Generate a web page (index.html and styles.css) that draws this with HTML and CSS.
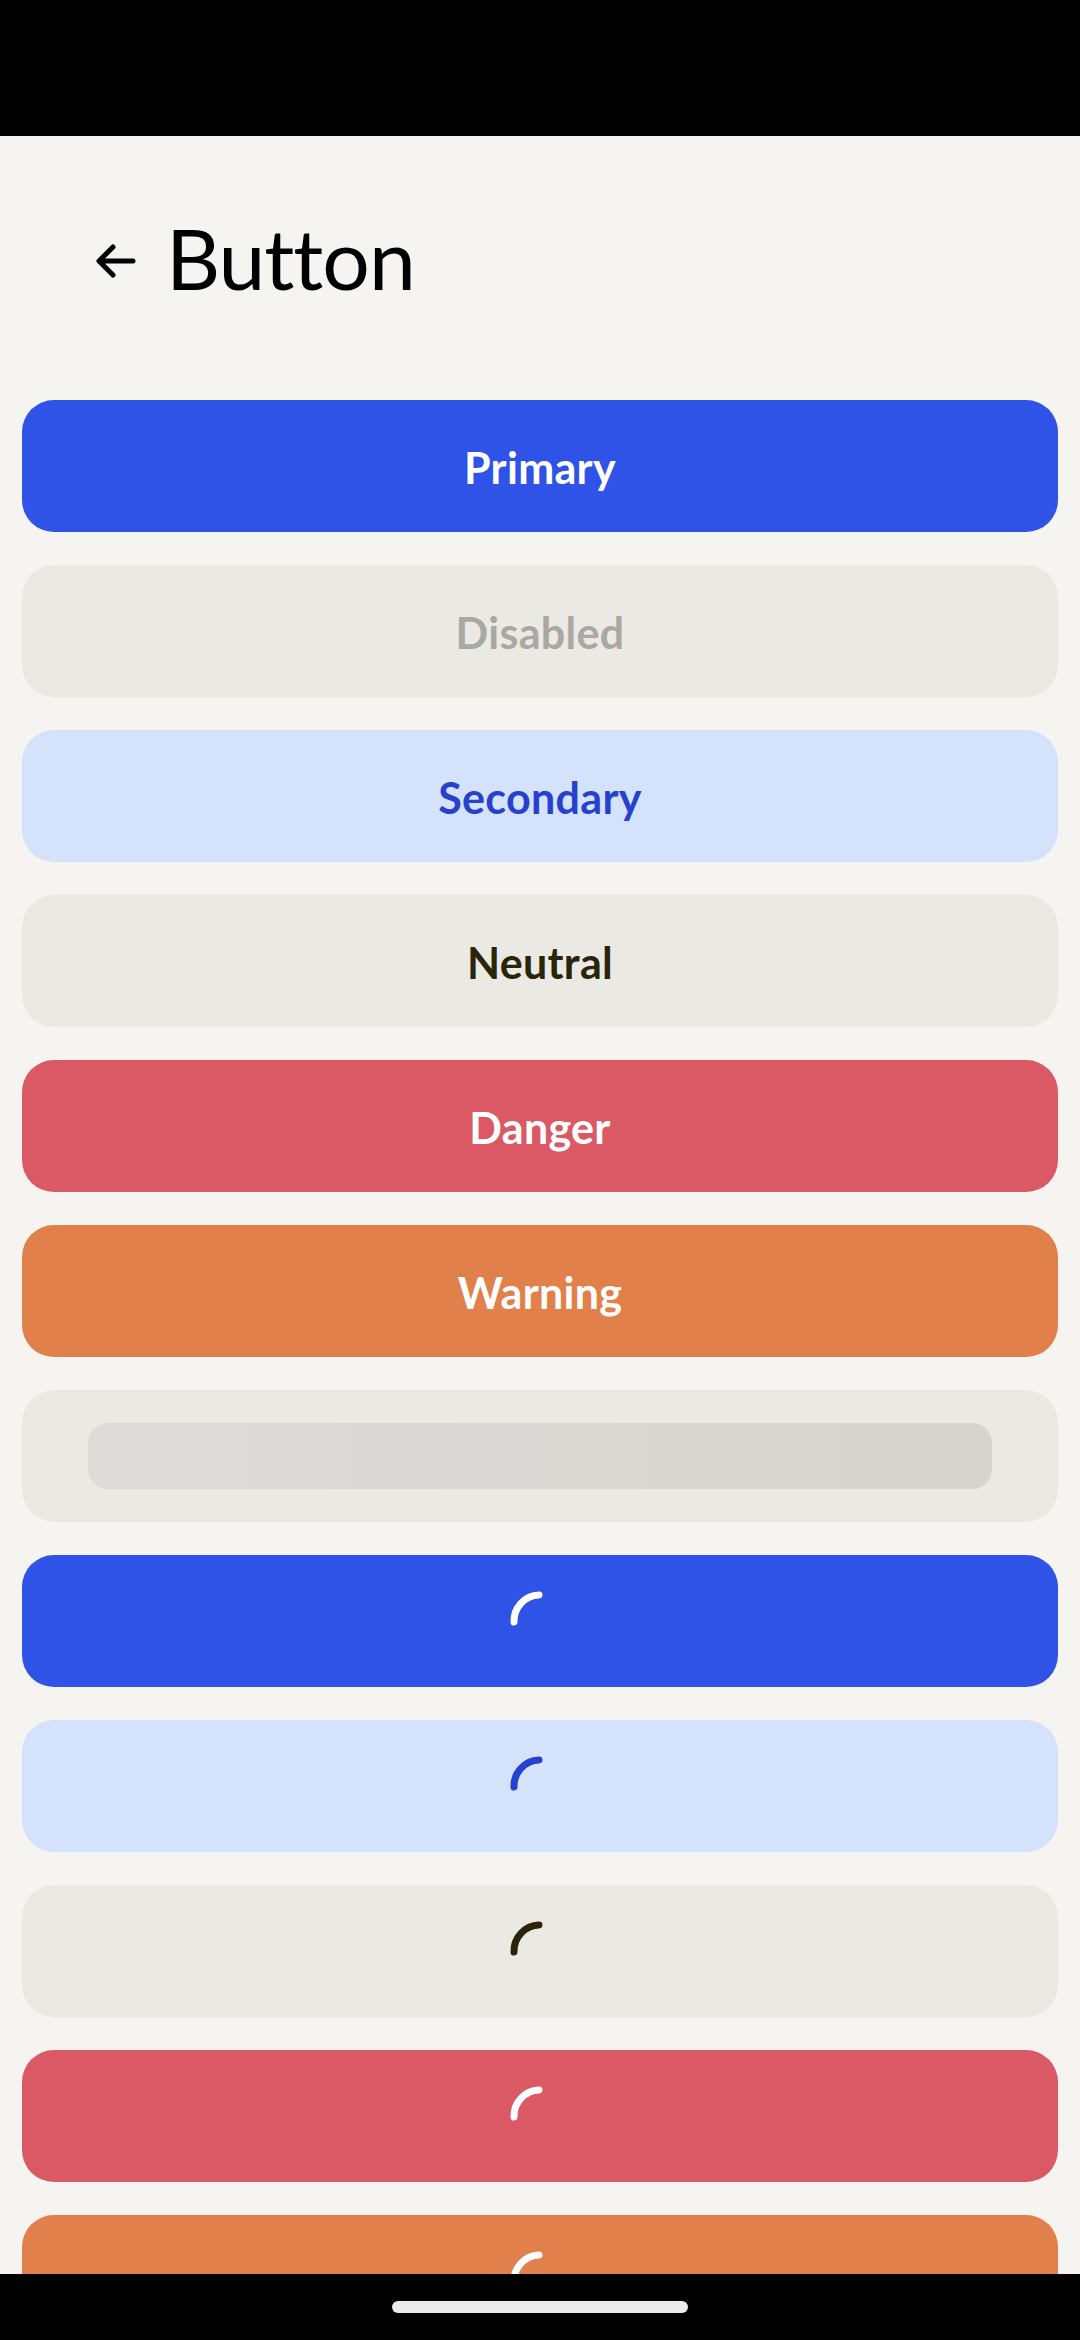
FILE: index.html
```html
<!DOCTYPE html>
<html lang="en">
<head>
<meta charset="utf-8">
<title>Button</title>
<link rel="stylesheet" href="styles.css">
</head>
<body>
<div class="statusbar"></div>
<header class="header">
  <svg class="back" viewBox="0 0 40 34" width="40" height="34" aria-hidden="true">
    <path d="M37 17 H4 M17 3 L3 17 L17 31" fill="none" stroke="#000" stroke-width="5" stroke-linecap="round" stroke-linejoin="round"/>
  </svg>
  <h1 class="title">Button</h1>
</header>
<main class="list">
  <div class="btn primary">Primary</div>
  <div class="btn disabled">Disabled</div>
  <div class="btn secondary">Secondary</div>
  <div class="btn neutral">Neutral</div>
  <div class="btn danger">Danger</div>
  <div class="btn warning">Warning</div>
  <div class="btn skeleton"><div class="skeleton-bar"></div></div>
  <div class="btn primary"><svg class="spinner" viewBox="0 0 64 64" width="64" height="64"><path d="M6 33 A26 26 0 0 1 31 6"/></svg></div>
  <div class="btn secondary"><svg class="spinner" viewBox="0 0 64 64" width="64" height="64"><path d="M6 33 A26 26 0 0 1 31 6"/></svg></div>
  <div class="btn neutral"><svg class="spinner" viewBox="0 0 64 64" width="64" height="64"><path d="M6 33 A26 26 0 0 1 31 6"/></svg></div>
  <div class="btn danger"><svg class="spinner" viewBox="0 0 64 64" width="64" height="64"><path d="M6 33 A26 26 0 0 1 31 6"/></svg></div>
  <div class="btn warning"><svg class="spinner" viewBox="0 0 64 64" width="64" height="64"><path d="M6 33 A26 26 0 0 1 31 6"/></svg></div>
</main>
<div class="navbar"><div class="pill"></div></div>
</body>
</html>
```
FILE: styles.css
```css
html, body {
  margin: 0;
  padding: 0;
  background: #f5f4f0;
  height: 2340px;
  overflow: hidden;
}
body {
  font-family: Lato, "Noto Sans", sans-serif;
}
.statusbar {
  height: 136px;
  background: #000;
}
.header {
  height: 264px;
  box-sizing: border-box;
  display: flex;
  align-items: center;
  padding-left: 96px;
  padding-bottom: 20px;
}
.back {
  flex: none;
  margin-top: 6px;
}
.title {
  margin: 0 0 0 30px;
  font-weight: 400;
  font-size: 84px;
  line-height: 1;
  color: #000;
  letter-spacing: -1px;
}
.list {
  display: flex;
  flex-direction: column;
  gap: 33px;
  padding: 0 22px;
}
.btn {
  height: 132px;
  border-radius: 32px;
  display: flex;
  align-items: center;
  justify-content: center;
  font-size: 43px;
  font-weight: 700;
  letter-spacing: 0.3px;
  box-sizing: border-box;
  padding-top: 3px;
}
.primary { background: #2e53e6; color: #fff; }
.disabled { background: #ebe9e4; color: #aaa8a2; }
.secondary { background: #d4e2fc; color: #2641cd; }
.neutral { background: #ebe9e4; color: #2a2408; }
.danger { background: #db5865; color: #fff; }
.warning { background: #e1804a; color: #fff; }
.skeleton {
  background: #ebe9e4;
  padding: 33px 66px;
  align-items: stretch;
}
.skeleton-bar {
  flex: 1;
  border-radius: 20px;
  background: linear-gradient(90deg, #dedcd8, #d5d4cf);
}
.spinner {
  margin-top: -3px;
}
.spinner path {
  fill: none;
  stroke: currentColor;
  stroke-width: 7;
  stroke-linecap: round;
}
.navbar {
  position: fixed;
  left: 0;
  right: 0;
  bottom: 0;
  height: 66px;
  background: #000;
  display: flex;
  justify-content: center;
  padding-top: 27px;
  box-sizing: border-box;
}
.pill {
  width: 296px;
  height: 12px;
  border-radius: 6px;
  background: #ebebeb;
}
```
